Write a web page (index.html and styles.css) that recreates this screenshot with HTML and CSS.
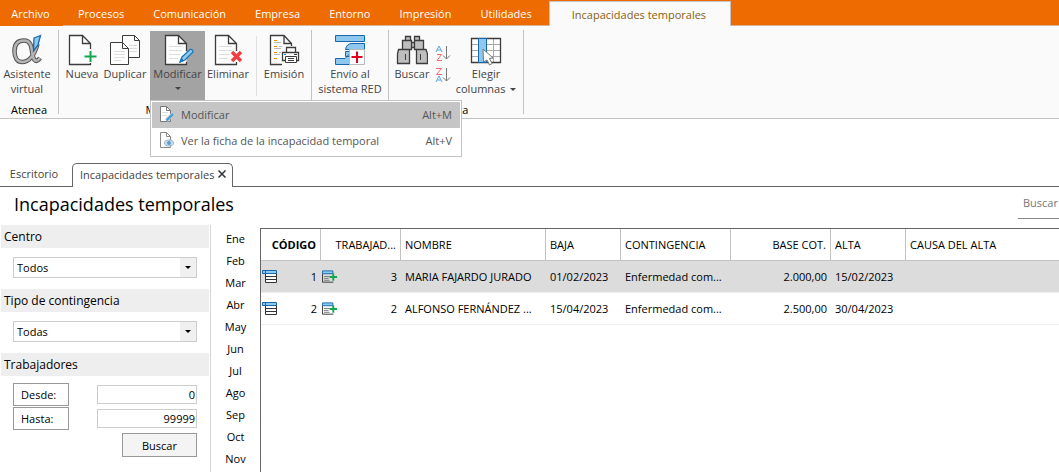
FILE: index.html
```html
<!DOCTYPE html>
<html lang="es">
<head>
<meta charset="utf-8">
<title>Incapacidades temporales</title>
<link rel="stylesheet" href="styles.css">
</head>
<body>
<svg class="defs" aria-hidden="true">
  <symbol id="page" viewBox="0 0 32 32">
    <path d="M5.500 1.500H18.500L26.500 9.500V30.500H5.500Z" fill="#fdfdfd"/>
    <path d="M26.500 17V9.500L18.500 1.500H5.500V30.500H26.500V28M18.500 1.500V9.500H26.500" fill="none" stroke="#3c3c3c" stroke-width="1.300"/>
  </symbol>
  <symbol id="lines" viewBox="0 0 32 32">
    <path d="M9 12.500H22M9 16.500H22M9 20.500H20M9 24.500H18" stroke="#dcdcdc"/>
  </symbol>
  <symbol id="list" viewBox="0 0 16 16">
    <path d="M3.500 4V13.500H14.500V4M3.500 7.500H14.500M3.500 10.500H14.500" fill="#fff" stroke="#333"/>
    <path d="M0.500 1.500H14.500V4.500H0.500ZM3.500 1.500V4.500" fill="#8fc8ee" stroke="#1668ad"/>
  </symbol>
  <symbol id="addlist" viewBox="0 0 17 16">
    <path d="M.500 4.500V13.500H12" fill="none" stroke="#333"/>
    <path d="M2 7.500H8M2 9.500H7M2 11.500H8" stroke="#777"/>
    <path d="M.500 1.500H11.500V4.500H.500Z" fill="#8fc8ee" stroke="#1668ad"/>
    <path d="M12 4V12M8 8H16" stroke="#12a84e" stroke-width="2"/>
  </symbol>
</svg>

<nav class="menubar">
  <button class="menu-tab first">Archivo</button>
  <button class="menu-tab">Procesos</button>
  <button class="menu-tab">Comunicación</button>
  <button class="menu-tab">Empresa</button>
  <button class="menu-tab">Entorno</button>
  <button class="menu-tab">Impresión</button>
  <button class="menu-tab">Utilidades</button>
  <button class="menu-tab active">Incapacidades temporales</button>
</nav>

<div class="ribbon">
  <section class="group">
    <div class="tools">
      <button class="tool wide">
        <svg viewBox="0 0 32 32"><path d="M26.500 10C24 19 19 28 11 28C6.500 28 3.500 24 3.500 17C3.500 10 7 6.500 13 6.500C20 6.500 20.500 13 21.500 20C22.500 27 25.500 29 29 24" fill="none" stroke="#555" stroke-width="4.600"/><path d="M26.500 10C24 19 19 28 11 28C6.500 28 3.500 24 3.500 17C3.500 10 7 6.500 13 6.500C20 6.500 20.500 13 21.500 20C22.500 27 25.500 29 29 24" fill="none" stroke="#b4b4b4" stroke-width="2.600"/><path d="M23 4L29.500 1.500L27 11L22.500 17Z" fill="#8fc8ee" stroke="#1668ad" stroke-width="1.300"/></svg>
        <span>Asistente<br>virtual</span>
      </button>
    </div>
    <h2>Atenea</h2>
  </section>
  <i class="rule"></i>
  <section class="group manage">
    <div class="tools">
      <button class="tool new">
        <svg viewBox="0 0 32 32"><use href="#page" x="-2"/><path d="M23.500 15V29M17 22.500H31" stroke="#fafafa" stroke-width="4"/><path d="M24.500 17V28M18.500 22.500H30.500" stroke="#12a84e" stroke-width="2"/></svg>
        <span>Nueva</span>
      </button>
      <button class="tool copy">
        <svg viewBox="0 0 32 32"><path d="M13.500 1.500H25.500L30.500 6.500V23.500H13.500Z" fill="#fdfdfd" stroke="#3c3c3c"/><path d="M25.500 1.500V6.500H30.500" fill="none" stroke="#3c3c3c"/><path d="M20 11.500H28M20 14.500H28M20 17.500H28" stroke="#ddd"/><path d="M1.500 8.500H13.500L19.500 14.500V30.500H1.500Z" fill="#fdfdfd" stroke="#3c3c3c"/><path d="M13.500 8.500V14.500H19.500" fill="none" stroke="#3c3c3c"/><path d="M5 17.500H16M5 20.500H16M5 23.500H16M5 26.500H12" stroke="#ddd"/></svg>
        <span>Duplicar</span>
      </button>
      <div class="dropdown">
        <button class="tool open" aria-expanded="true">
          <svg viewBox="0 0 32 32"><use href="#page" x="-2"/><use href="#lines" x="-2"/><path d="M18 28L20 23L28 15.500Q31 15 31 18L23 26Z" fill="#8fc8ee" stroke="#1976b9" stroke-width="1.300"/><path d="M18 28L19.500 24.500L21.500 26.500Z" fill="#1976b9" stroke="#1976b9"/></svg>
          <span>Modificar</span><i class="caret"></i>
        </button>
        <div class="menu" role="menu">
          <button class="item current" role="menuitem">
            <svg viewBox="0 0 16 16"><path d="M2.500 .500H8.500L12.500 4.500V15.500H2.500Z" fill="#fff" stroke="#777"/><path d="M8.500 .500V4.500H12.500" fill="none" stroke="#777"/><path d="M4 6.500H10M4 9.500H9" stroke="#ddd"/><path d="M8.500 14.500L15 8" stroke="#c5c5c5" stroke-width="4"/><path d="M8.500 14.500L15 8" stroke="#3b9bdb" stroke-width="2"/></svg>
            <span>Modificar</span><kbd>Alt+M</kbd>
          </button>
          <button class="item" role="menuitem">
            <svg viewBox="0 0 16 16"><path d="M2.500 .500H8.500L12.500 4.500V15.500H2.500Z" fill="#fff" stroke="#888"/><path d="M8.500 .500V4.500H12.500" fill="none" stroke="#888"/><ellipse cx="11" cy="11" rx="4.500" ry="3" fill="#c9dff0" stroke="#96b0c6"/><circle cx="11" cy="11" r="2" fill="#5f9bca"/></svg>
            <span>Ver la ficha de la incapacidad temporal</span><kbd>Alt+V</kbd>
          </button>
        </div>
      </div>
      <button class="tool copy">
        <svg viewBox="0 0 32 32"><use href="#page" x="-2"/><use href="#lines" x="-2"/><path d="M19 18L29 27M29 18L19 27" stroke="#fafafa" stroke-width="6"/><path d="M20 18L29 27M29 18L20 27" stroke="#f23e3e" stroke-width="3.500"/></svg>
        <span>Eliminar</span>
      </button>
      <i class="rule light"></i>
      <button class="tool copy">
        <svg viewBox="0 0 32 32"><path d="M14 30.500H2.500V1.500H16L23.500 9.500V12M16 1.500V9.500H23.500" fill="#fff" stroke="#3c3c3c" stroke-width="1.300"/><path d="M6 6.500H9M6 12.500H9M6 18.500H9M6 24.500H9" stroke="#ef8a00"/><path d="M6 8.500H13M6 14.500H13M6 20.500H12M11 12.500H14M11 18.500H13" stroke="#bbb"/><path d="M18.500 18V13.500H27.500V18M17.500 26.500H14.500V18.500H30.500V26.500H28" fill="#fff" stroke="#3c3c3c" stroke-width="1.300"/><path d="M17.500 22.500H28.500V28.500H17.500ZM20 24.500H26M20 26.500H26" fill="#fff" stroke="#3c3c3c"/><path d="M26 20.500H29" stroke="#3c3c3c"/><path d="M16 20.500H18" stroke="#2492dd"/></svg>
        <span>Emisión</span>
      </button>
    </div>
    <h2>Mantenimiento</h2>
  </section>
  <i class="rule"></i>
  <section class="group send">
    <div class="tools">
      <button class="tool">
        <svg viewBox="0 0 32 32"><path d="M1.500 1.500H30.500V7.500H1.500ZM30.500 9.500V15.500H11.500Q12.500 9.500 18 9.500ZM11.500 17.500H18V22.500H11.500ZM1.500 24.500H11L15.500 20V30.500H1.500Z" fill="#8fc8ee" stroke="#1668ad"/><path d="M15.500 15.500H30.500V30.500H15.500Z" fill="#fff" stroke="#b9b9b9"/><path d="M23 17.500V29M17.500 23H28.500" stroke="#e2001a" stroke-width="2"/></svg>
        <span>Envío al<br>sistema RED</span>
      </button>
    </div>
  </section>
  <i class="rule"></i>
  <section class="group view">
    <div class="tools">
      <button class="tool copy">
        <svg viewBox="0 0 32 32"><path d="M9.500 2.500H14.500V6.500H9.500ZM18.500 2.500H23.500V6.500H18.500ZM6.500 6.500H15.500V15.500H6.500ZM18.500 6.500H27.500V15.500H18.500ZM15.500 8.500H18.500V13.500H15.500ZM2.500 15.500H13.500V29.500H1.500V20ZM20.500 15.500H30L31.500 20V29.500H20.500Z" fill="#bebebe" stroke="#3c3c3c" stroke-width="1.300"/><path d="M9.500 20V26M24.500 20V26" stroke="#3c3c3c"/></svg>
        <span>Buscar</span>
      </button>
      <div class="sorts">
        <button aria-label="Orden ascendente"><svg viewBox="0 0 16 16"><path d="M1 7L4 1L7 7M2 5H6" fill="none" stroke="#5aa9dc"/><path d="M2 9.500H6.500L2 15.500H7" fill="none" stroke="#ee6b6b"/><path d="M11.500 1V14M8 10.500L11.500 14L15 10.500" fill="none" stroke="#777"/></svg></button>
        <button aria-label="Orden descendente"><svg viewBox="0 0 16 16"><path d="M1 1.500H6.500L1.500 7.500H7" fill="none" stroke="#ee6b6b"/><path d="M1 15L4 9L7 15M2 13H6" fill="none" stroke="#5aa9dc"/><path d="M11.500 1V14M8 10.500L11.500 14L15 10.500" fill="none" stroke="#777"/></svg></button>
      </div>
      <button class="tool columns">
        <svg viewBox="0 0 32 32"><path d="M1.500 4.500H30.500V28.500H1.500Z" fill="#fff"/><path d="M2 10.500H30M2 16.500H30M2 22.500H30M16.500 5V28M23.500 5V28" stroke="#aaa"/><path d="M1.500 4.500H30.500V28.500H1.500Z" fill="none" stroke="#3c3c3c" stroke-width="1.300"/><path d="M8.500 4.500H16.500V28.500H8.500Z" fill="#8fc8ee" stroke="#1668ad"/><path d="M13 15L23 24L19.500 24.500L22 29.500L19.500 31L17 26L13.500 28Z" fill="#fff" stroke="#777"/></svg>
        <span>Elegir<br>columnas <i class="caret"></i></span>
      </button>
    </div>
    <h2>Vista</h2>
  </section>
  <i class="rule"></i>
</div>

<div class="doc-tabs">
  <button class="doc-tab">Escritorio</button>
  <div class="doc-tab active">Incapacidades temporales
    <button class="close" aria-label="Cerrar"><svg viewBox="0 0 8 8"><path d="M.500 .500L7.500 7.500M7.500 .500L.500 7.500" stroke="#333" stroke-width="1.500"/></svg></button>
  </div>
</div>

<header class="title-row">
  <h1>Incapacidades temporales</h1>
  <input class="search" type="text" placeholder="Buscar" aria-label="Buscar en la lista">
</header>

<main class="content">
  <form class="filters">
    <label class="heading" for="centro">Centro</label>
    <div class="select"><select id="centro"><option>Todos</option></select><i class="caret"></i></div>
    <label class="heading" for="tipo">Tipo de contingencia</label>
    <div class="select"><select id="tipo"><option>Todas</option></select><i class="caret"></i></div>
    <h2 class="heading">Trabajadores</h2>
    <div class="range">
      <button type="button" id="desde">Desde:</button><input type="text" value="0" aria-labelledby="desde">
      <button type="button" id="hasta">Hasta:</button><input type="text" value="99999" aria-labelledby="hasta">
    </div>
    <button type="button" class="submit">Buscar</button>
  </form>

  <nav class="months">
    <button>Ene</button><button>Feb</button><button>Mar</button><button>Abr</button>
    <button>May</button><button>Jun</button><button>Jul</button><button>Ago</button>
    <button>Sep</button><button>Oct</button><button>Nov</button>
  </nav>

  <div class="grid">
    <table>
      <colgroup><col class="c60"><col class="c80"><col class="c145"><col class="c75"><col class="c110"><col class="c100"><col class="c75"><col></colgroup>
      <thead>
        <tr><th class="num sorted">CÓDIGO</th><th class="num">TRABAJAD...</th><th>NOMBRE</th><th>BAJA</th><th>CONTINGENCIA</th><th class="num">BASE COT.</th><th>ALTA</th><th>CAUSA DEL ALTA</th></tr>
      </thead>
      <tbody>
        <tr class="selected">
          <td class="with-icon"><div><svg viewBox="0 0 16 16"><use href="#list"/></svg>1</div></td>
          <td class="with-icon"><div><svg viewBox="0 0 17 16"><use href="#addlist"/></svg>3</div></td>
          <td>MARIA FAJARDO JURADO</td><td>01/02/2023</td><td>Enfermedad com...</td><td class="num">2.000,00</td><td>15/02/2023</td><td></td>
        </tr>
        <tr>
          <td class="with-icon"><div><svg viewBox="0 0 16 16"><use href="#list"/></svg>2</div></td>
          <td class="with-icon"><div><svg viewBox="0 0 17 16"><use href="#addlist"/></svg>2</div></td>
          <td>ALFONSO FERNÁNDEZ ...</td><td>15/04/2023</td><td>Enfermedad com...</td><td class="num">2.500,00</td><td>30/04/2023</td><td></td>
        </tr>
      </tbody>
    </table>
  </div>
</main>
</body>
</html>
```
FILE: styles.css
```css
* { box-sizing: border-box; }
body {
  margin: 0;
  min-height: 100vh;
  display: flex;
  flex-direction: column;
  overflow: hidden;
  background: #fff;
  color: #000;
  font-family: "Open Sans", "Noto Sans", sans-serif;
  font-size: 11px;
  line-height: 15px;
}
button, input, select, kbd { font: inherit; color: inherit; }
button { padding: 0; border: 0; background: none; white-space: nowrap; }
h1, h2 { margin: 0; font-weight: 400; }
.defs { position: absolute; width: 0; height: 0; }
.caret {
  display: inline-block;
  border: 3px solid transparent;
  border-top-color: currentColor;
  border-bottom-width: 0;
}

.menubar {
  display: flex;
  gap: 1px;
  height: 26px;
  background: #ed6b00;
  box-shadow: inset 0 -1px #d8b59a;
  color: #fff;
}
.menu-tab { padding: 0 14px; }
.menu-tab.first { width: 63px; padding: 0 2px 0 0; background: #ed6b00; }
.menu-tab.active {
  margin: 1px 0 0 2px;
  padding: 0 24px 0 22px;
  background: #fafafa;
  border: 1px solid #c3c3c3;
  border-bottom: 0;
  color: #8a5f10;
}

.ribbon {
  display: flex;
  align-items: flex-start;
  height: 93px;
  padding-top: 4px;
  background: #fafafa;
  border-bottom: 1px solid #c3c3c3;
}
.group { display: flex; flex-direction: column; padding-top: 1px; }
.group h2 { margin-top: 2px; font-size: 11px; text-align: center; }
.tools { display: flex; height: 69px; }
.rule { width: 1px; height: 84px; background: #c3c3c3; }
.rule.light { height: 60px; margin: 5px 4px 0 5px; background: #e0e0e0; }
.tool {
  display: flex;
  flex-direction: column;
  align-items: center;
  padding-top: 3px;
  color: #444;
}
.tool svg { width: 32px; height: 32px; }
.wide { width: 54px; margin-right: 4px; }
.new { width: 40px; }
.copy { width: 46px; }
.manage .tools { padding: 0 4px 0 3px; }
.dropdown { position: relative; margin-left: 2px; }
.open { width: 55px; height: 69px; background: #a3a3a3; }
.open .caret { margin-top: 6px; }
.menu {
  position: absolute;
  z-index: 2;
  top: 69px;
  left: 0;
  width: 312px;
  padding: 1px 1px 2px;
  background: #fff;
  border: 1px solid #c3c3c3;
  color: #555;
}
.item { display: flex; align-items: center; width: 100%; height: 26px; padding: 0 8px 2px 6px; }
.item svg { width: 16px; height: 16px; margin-right: 7px; }
.item kbd { margin-left: auto; }
.item.current { background: #c5c5c5; }
.send .tools { width: 76px; justify-content: center; }
.view .tools { width: 134px; }
.sorts { display: flex; flex-direction: column; gap: 6px; padding-top: 14px; }
.sorts button, .sorts svg { display: block; width: 16px; height: 16px; }
.columns { width: 70px; }
.columns .caret { margin: 0 0 2px 2px; }

.doc-tabs {
  display: flex;
  height: 68px;
  padding-top: 44px;
  box-shadow: inset 0 -1px #666;
  color: #444;
}
.doc-tab { width: 72px; padding: 0 4px 3px 0; }
.doc-tab.active {
  display: flex;
  align-items: center;
  gap: 4px;
  width: 161px;
  padding: 0 7px 3px;
  white-space: nowrap;
  background: #fff;
  border: 1px solid #666;
  border-bottom: 0;
  border-radius: 5px 5px 0 0;
}
.close svg { display: block; width: 8px; height: 8px; }

.title-row { display: flex; justify-content: space-between; height: 38px; padding-left: 14px; }
h1 { font-size: 18px; line-height: 34px; }
.search {
  width: 41px;
  height: 32px;
  padding: 0 0 0 5px;
  border: 0;
  border-bottom: 1px solid #888;
  background: none;
}
.search::placeholder { color: #777; opacity: 1; }

.content { display: flex; flex: 1; }
.filters { width: 211px; padding: 0 1px; border-right: 1px solid #d5d5d5; }
.heading {
  display: block;
  height: 23px;
  padding-left: 3px;
  background: #eee;
  font-size: 12px;
  line-height: 23px;
}
.select { position: relative; margin: 9px 12px 11px; border: 1px solid #ccc; height: 21px; }
.select select {
  display: block;
  width: 100%;
  height: 19px;
  padding: 0 3px;
  border: 0;
  appearance: none;
  background: linear-gradient(#f0f0f0, #f0f0f0) right / 16px 100% no-repeat #fff;
}
.select .caret { position: absolute; top: 8px; right: 5px; pointer-events: none; }
.range {
  display: grid;
  grid-template-columns: 56px 1fr;
  align-items: center;
  gap: 1px 28px;
  margin: 7px 12px 3px;
}
.range button {
  height: 23px;
  padding-left: 7px;
  border: 1px solid #999;
  text-align: left;
}
.range input {
  width: 100%;
  height: 19px;
  padding: 0 1px 1px;
  border: 1px solid #ccc;
  text-align: right;
}
.submit {
  display: block;
  width: 75px;
  height: 24px;
  margin: 0 12px 0 auto;
  border: 1px solid #999;
  background: #f4f4f4;
}
.months { display: flex; flex-direction: column; width: 49px; padding-top: 2px; }
.months button { height: 22px; }

.grid { flex: 1; min-width: 0; margin-top: 3px; border: solid #666; border-width: 1px 0 0 1px; }
table { width: 100%; table-layout: fixed; border-collapse: separate; border-spacing: 0; }
th, td { height: 32px; padding: 0 4px; white-space: nowrap; text-align: left; }
th { border: solid #c3c3c3; border-width: 0 1px 1px 0; font-weight: 400; }
th:last-child { border-right: 0; }
td { border-bottom: 1px solid #eee; }
.sorted { font-weight: 700; }
.num { text-align: right; }
.selected { background: #dcdcdc; }
.with-icon { padding: 0 4px 0 1px; }
.with-icon div { display: flex; align-items: center; justify-content: space-between; }
.with-icon svg { width: 16px; height: 16px; }
.c60 { width: 60px; }
.c75 { width: 75px; }
.c80 { width: 80px; }
.c100 { width: 100px; }
.c110 { width: 110px; }
.c145 { width: 145px; }
```
